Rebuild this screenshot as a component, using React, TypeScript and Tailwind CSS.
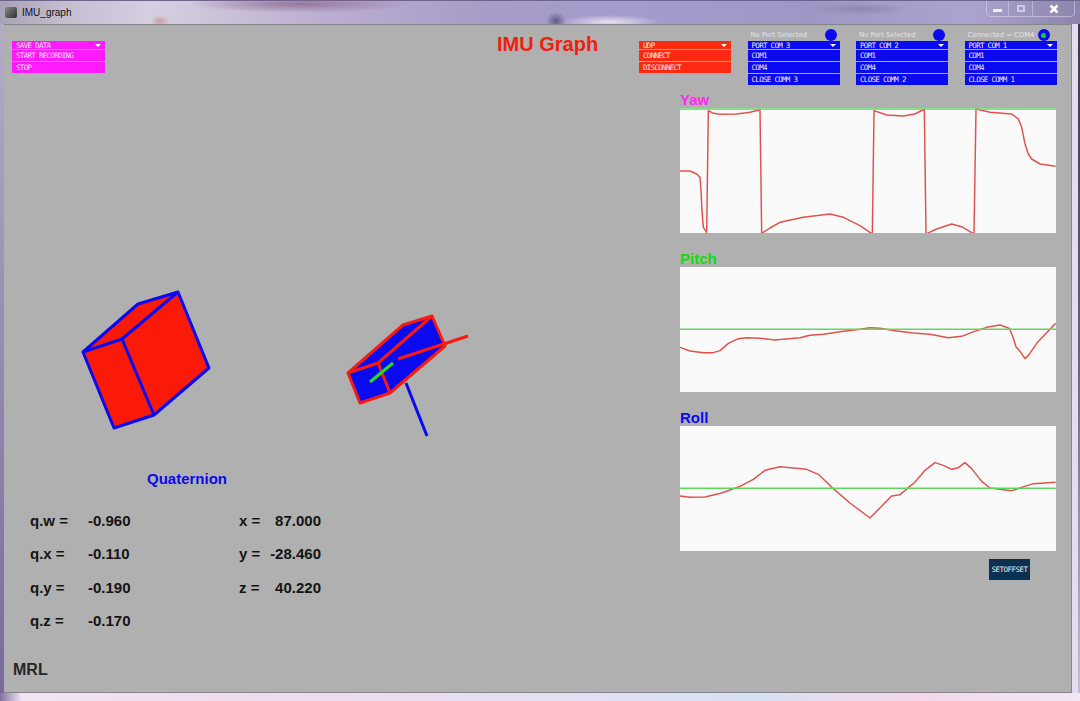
const YAW =
  '30,241 60,241 80,250 90,260 93,300 96,360 100,410 110,425 115,60 130,68 150,71 200,70 240,65 270,57 275,428 300,412 330,395 400,380 480,370 520,380 570,405 607,430 612,60 650,73 700,76 735,70 763,55 768,430 800,415 845,400 875,408 912,430 918,55 960,65 1025,70 1045,85 1055,110 1065,160 1075,190 1085,205 1110,220 1157,227';
const PITCH =
  '30,307 60,318 100,323 130,323 150,317 175,295 205,281 230,278 270,280 315,285 390,278 420,271 460,268 510,260 570,253 600,248 630,250 680,258 730,264 780,268 835,278 875,274 905,262 950,247 990,240 1018,250 1030,280 1038,305 1052,322 1065,341 1075,332 1100,295 1157,235';
const ROLL =
  '30,272 60,276 105,275 155,263 210,243 250,222 285,195 330,184 410,192 445,207 490,250 540,293 600,338 665,272 690,268 735,230 765,195 795,172 820,180 845,192 865,187 885,172 905,190 935,228 960,248 1025,256 1090,235 1157,231';

const PORTS = [
  { status: 'No Port Selected', title: 'PORT COM 3', close: 'CLOSE COMM 3', connected: false },
  { status: 'No Port Selected', title: 'PORT COM 2', close: 'CLOSE COMM 2', connected: false },
  { status: 'Connected = COM4', title: 'PORT COM 1', close: 'CLOSE COMM 1', connected: true },
];

const QUATERNION = [
  { label: 'q.w =', value: '-0.960', axis: 'x =', angle: '87.000' },
  { label: 'q.x =', value: '-0.110', axis: 'y =', angle: '-28.460' },
  { label: 'q.y =', value: '-0.190', axis: 'z =', angle: '40.220' },
  { label: 'q.z =', value: '-0.170', axis: '', angle: '' },
];

const pixelFont =
  "font-['DejaVu_Sans_Mono',monospace] text-[7.5px] leading-none tracking-[-0.7px] whitespace-nowrap text-[#f0e4f0]";

function MenuTitle({ label, bg }: { label: string; bg: string }) {
  return (
    <div className={`flex h-[8px] items-center justify-between pl-[4px] pr-[4px] ${bg} ${pixelFont}`}>
      <span className="pt-px">{label}</span>
      <span className="h-0 w-0 border-x-[3px] border-t-[3px] border-x-transparent border-t-white" />
    </div>
  );
}

function MenuItem({ label, bg }: { label: string; bg: string }) {
  return (
    <div className={`mt-px flex h-[11px] items-center pl-[4px] ${bg} ${pixelFont}`}>
      <span>{label}</span>
    </div>
  );
}

function Graph({
  label,
  color,
  points,
  lineY,
  minY,
  gap,
}: {
  label: string;
  color: string;
  points: string;
  lineY: number;
  minY: number;
  gap: string;
}) {
  return (
    <div className={gap}>
      <div className={`h-[17px] text-[15px] leading-[17px] font-bold ${color}`}>{label}</div>
      <div className="h-[125px] w-[376px] bg-[#fafafa]">
        <svg className="block h-full w-full" viewBox={`30 ${minY} 1128 375`} preserveAspectRatio="none">
          <polyline points={points} fill="none" stroke="#e2524c" strokeWidth="4.4" strokeLinejoin="round" />
          <line x1="30" x2="1158" y1={lineY} y2={lineY} stroke="#5ed85e" strokeWidth="4.4" />
        </svg>
      </div>
    </div>
  );
}

function Cubes() {
  return (
    <svg className="block" width="676" height="368" viewBox="4 92 676 368">
      <g stroke="#0a0af0" strokeWidth="3" strokeLinejoin="round" fill="#fb1a08">
        <polygon points="83,351 138,303 178,291 209,367 154,414 114,427" />
        <polyline points="83,351 122,338 178,291" fill="none" />
        <polyline points="122,338 154,414" fill="none" />
      </g>
      <line x1="406" y1="382" x2="427" y2="435" stroke="#0a0af0" strokeWidth="3" />
      <g stroke="#f81a10" strokeWidth="3" strokeLinejoin="round" fill="#0a0af0">
        <polygon points="348,372 403,324 432,315 445,345 390,392 360,402" />
        <polyline points="348,372 378,362 432,315" fill="none" />
        <polyline points="378,362 390,392" fill="none" />
      </g>
      <line x1="398" y1="358" x2="468" y2="335" stroke="#f81a10" strokeWidth="3" />
      <line x1="370" y1="381" x2="393" y2="362" stroke="#22e01a" strokeWidth="3" />
    </svg>
  );
}

export default function App() {
  return (
    <div className="flex h-[701px] w-[1080px] flex-col overflow-hidden bg-[#efe6f4] font-['Liberation_Sans',Arial,sans-serif]">
      {/* title bar, over a blurred desktop */}
      <div className="flex h-[24px] shrink-0 items-start justify-between border-t border-[#6f6490] bg-[radial-gradient(ellipse_10px_6px_at_160px_20px,#c8a0a0,transparent),radial-gradient(ellipse_10px_9px_at_556px_20px,#5c5c80,transparent),radial-gradient(ellipse_50px_7px_at_610px_21px,#e6e2f0,transparent),radial-gradient(ellipse_50px_6px_at_860px_8px,#8f88ac,transparent),radial-gradient(ellipse_110px_9px_at_300px_3px,#94789c,transparent),linear-gradient(90deg,#a9a2b6_0%,#c4bed0_6%,#d6cfe0_14%,#bcaed0_30%,#a89cc8_45%,#a49ccc_58%,#9e96c4_75%,#aca4d0_90%,#8c84ac_100%)]">
        <div className="flex h-[22px] items-center pl-[5px]">
          <span className="h-[11px] w-[12px] rounded-[2px] bg-[linear-gradient(135deg,#8a8a8a,#2e2e2e)]" />
          <span className="ml-[5px] text-[10px] text-[#111]">IMU_graph</span>
        </div>
        <div className="mr-[5px] flex h-[16px] items-center rounded-b-[5px] border border-t-0 border-[#dcd6e8]/60">
          <span className="flex h-full w-[22px] items-start justify-center border-r border-[#dcd6e8]/50">
            <span className="mt-[8px] h-[3px] w-[9px] bg-[#f0eef4]" />
          </span>
          <span className="flex h-full w-[24px] items-start justify-center border-r border-[#dcd6e8]/50">
            <span className="mt-[4px] h-[7px] w-[8px] border-2 border-[#cfc8e0]" />
          </span>
          <span className="flex h-full w-[41px] items-center justify-center">
            <svg width="10" height="10" viewBox="0 0 10 10">
              <path d="M1.5 1.5 8.5 8.5M8.5 1.5 1.5 8.5" stroke="#fff" strokeWidth="2.6" />
            </svg>
          </span>
        </div>
      </div>

      <div className="flex min-h-0 flex-1">
        <div className="w-[4px] bg-[linear-gradient(180deg,#b4acc4_0%,#9c90b4_40%,#7a6a98_100%)]" />
        <div className="flex w-[1068px] flex-col border-t border-r border-b border-[#85858c] bg-[#b0b0b0]">
          {/* top controls */}
          <div className="flex h-[68px] items-start">
            <div className="mt-[16px] ml-[8px] w-[93px]">
              <MenuTitle label="SAVE DATA" bg="bg-[#ff1aff]" />
              <MenuItem label="START RECORDING" bg="bg-[#ff1aff]" />
              <MenuItem label="STOP" bg="bg-[#ff1aff]" />
            </div>
            <div className="mt-[7px] ml-[392px] w-[142px] text-[20px] leading-[24px] font-bold text-[#f01e10]">
              IMU Graph
            </div>
            <div className="mt-[16px] w-[92px]">
              <MenuTitle label="UDP" bg="bg-[#fb2a10]" />
              <MenuItem label="CONNECT" bg="bg-[#fb2a10]" />
              <MenuItem label="DISCONNECT" bg="bg-[#fb2a10]" />
            </div>
            {PORTS.map((port) => (
              <div key={port.title} className="mt-[4px] ml-[16.5px] w-[92px]">
                <div className="flex h-[12px] items-center justify-between pl-[3px] pr-[3px]">
                  <span className="font-['DejaVu_Sans',sans-serif] text-[6.8px] leading-none whitespace-nowrap text-[#e6e6e6]">
                    {port.status}
                  </span>
                  <span
                    className={`flex h-[12px] w-[12px] items-center justify-center rounded-full bg-[#0a0af0] ${port.connected ? 'mr-[4px]' : ''}`}
                  >
                    {port.connected ? <span className="h-[5px] w-[5px] rounded-full bg-[#10d020]" /> : null}
                  </span>
                </div>
                <MenuTitle label={port.title} bg="bg-[#0a0af0]" />
                <MenuItem label="COM1" bg="bg-[#0a0af0]" />
                <MenuItem label="COM4" bg="bg-[#0a0af0]" />
                <MenuItem label={port.close} bg="bg-[#0a0af0]" />
              </div>
            ))}
          </div>

          <div className="flex min-h-0 flex-1">
            {/* 3D views and readouts */}
            <div className="w-[676px]">
              <Cubes />
              <div className="mt-[9px] pl-[143px] text-[15px] leading-[17px] font-bold text-[#0a0ae8]">
                Quaternion
              </div>
              <div className="mt-[25px] pl-[26px]">
                {QUATERNION.map((row) => (
                  <div
                    key={row.label}
                    className="grid h-[33.4px] grid-cols-[58px_151px_82px] text-[15px] leading-[17px] font-bold text-[#141414]"
                  >
                    <span>{row.label}</span>
                    <span>{row.value}</span>
                    <span className="flex justify-between">
                      <span>{row.axis}</span>
                      <span>{row.angle}</span>
                    </span>
                  </div>
                ))}
              </div>
              <div className="mt-[15px] pl-[9px] text-[16px] leading-[18px] font-bold text-[#262626]">MRL</div>
            </div>

            {/* graphs */}
            <div className="w-[376px]">
              <Graph label="Yaw" color="text-[#ff2cf0]" points={YAW} lineY={55} minY={52} gap="mt-[-2px]" />
              <Graph label="Pitch" color="text-[#10dc10]" points={PITCH} lineY={253} minY={66} gap="mt-[17px]" />
              <Graph label="Roll" color="text-[#0a0af0]" points={ROLL} lineY={249} minY={62} gap="mt-[17px]" />
              <div className="mt-[8px] ml-[309px] flex h-[21px] w-[41px] items-center justify-center bg-[#0c3050] font-['DejaVu_Sans_Mono',monospace] text-[7.5px] leading-none tracking-[-0.5px] text-[#e6eef2]">
                SETOFFSET
              </div>
            </div>
          </div>
        </div>
        <div className="flex w-[8px]">
          <div className="w-[6px] bg-[#e6dcf0]" />
          <div className="w-[2px] bg-[linear-gradient(180deg,#3c3650_0%,#6a6080_50%,#c8bcd8_100%)]" />
        </div>
      </div>
      <div className="h-[8px] shrink-0 bg-[linear-gradient(90deg,#8070a0_0%,#efe6f4_2%,#f0dcec_20%,#e4e0f4_50%,#d8e0f4_70%,#f4d8e8_85%,#f0e8f4_100%)]" />
    </div>
  );
}
